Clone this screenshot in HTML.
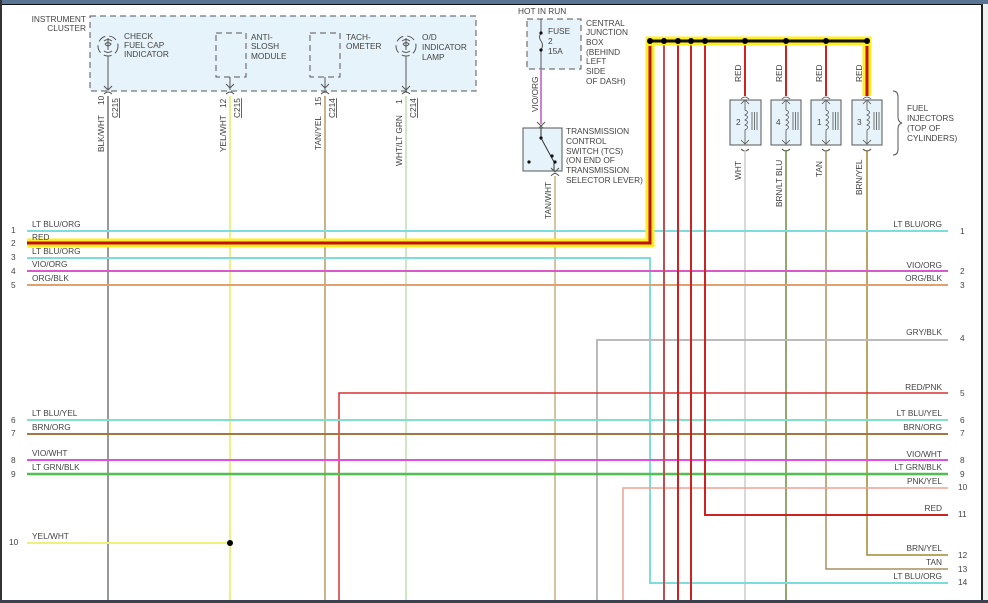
<!DOCTYPE html>
<html><head><meta charset="utf-8"><style>
html,body{margin:0;padding:0;background:#fff;width:988px;height:603px;overflow:hidden}
svg{display:block}
text{font-family:"Liberation Sans",sans-serif;font-size:8.3px;fill:#444}
</style></head><body>
<svg width="988" height="603" viewBox="0 0 988 603" xmlns="http://www.w3.org/2000/svg">
<rect x="0" y="0" width="988" height="603" fill="#fff"/>
<rect x="0" y="0" width="988" height="4" fill="#5a7493"/>
<rect x="0" y="4" width="982" height="1" fill="#111"/>
<rect x="0" y="0" width="2" height="603" fill="#333"/>
<rect x="981" y="4" width="2" height="596" fill="#222"/>
<rect x="983" y="4" width="5" height="596" fill="#f0f0f0"/>
<rect x="0" y="600" width="988" height="3" fill="#3a4250"/>

<rect x="90" y="16" width="386" height="75" fill="#e6f3fa" stroke="#555" stroke-dasharray="6,4"/>
<text x="86" y="22" text-anchor="end">INSTRUMENT</text>
<text x="86" y="31" text-anchor="end">CLUSTER</text>
<g fill="none" stroke="#555">
<circle cx="108" cy="46" r="10" stroke-dasharray="8,4"/>
<path d="M104 41 q4-3 8 0 M104 51 q4 3 8 0 M108 38 v12 M105 44 q3-3 6 0 q-3 4-6 0"/>
<circle cx="406" cy="46" r="10" stroke-dasharray="8,4"/>
<path d="M402 41 q4-3 8 0 M402 51 q4 3 8 0 M406 38 v12 M403 44 q3-3 6 0 q-3 4-6 0"/>
<rect x="216" y="33" width="30" height="44" stroke-dasharray="6,4"/>
<rect x="310" y="33" width="30" height="44" stroke-dasharray="6,4"/>
<path d="M108 56 V90 M104 86 l4 4 l4-4 M104 94 q4-4 8 0"/>
<path d="M406 56 V90 M402 86 l4 4 l4-4 M402 94 q4-4 8 0"/>
<path d="M230 77 V90 M226 84 l4 4 l4-4 M226 94 q4-4 8 0"/>
<path d="M325 77 V90 M321 84 l4 4 l4-4 M321 94 q4-4 8 0"/>
</g>
<text x="124" y="39">CHECK</text><text x="124" y="48">FUEL CAP</text><text x="124" y="57">INDICATOR</text>
<text x="251" y="40">ANTI-</text><text x="251" y="49">SLOSH</text><text x="251" y="59">MODULE</text>
<text x="346" y="40">TACH-</text><text x="346" y="49">OMETER</text>
<text x="422" y="40">O/D</text><text x="422" y="50">INDICATOR</text><text x="422" y="60">LAMP</text>
<g>
<text transform="translate(104,152) rotate(-90)">BLK/WHT</text>
<text transform="translate(104,105) rotate(-90)">10</text>
<text transform="translate(118,118) rotate(-90)" text-decoration="underline">C215</text>
<text transform="translate(226,152) rotate(-90)">YEL/WHT</text>
<text transform="translate(226,108) rotate(-90)">12</text>
<text transform="translate(240,118) rotate(-90)" text-decoration="underline">C215</text>
<text transform="translate(321,150) rotate(-90)">TAN/YEL</text>
<text transform="translate(321,106) rotate(-90)">15</text>
<text transform="translate(335,118) rotate(-90)" text-decoration="underline">C214</text>
<text transform="translate(402,166) rotate(-90)">WHT/LT GRN</text>
<text transform="translate(402,104) rotate(-90)">1</text>
<text transform="translate(416,118) rotate(-90)" text-decoration="underline">C214</text>
<text transform="translate(538,112) rotate(-90)">VIO/ORG</text>
<text transform="translate(551,219) rotate(-90)">TAN/WHT</text>
<text transform="translate(741,82) rotate(-90)">RED</text>
<text transform="translate(782,82) rotate(-90)">RED</text>
<text transform="translate(822,82) rotate(-90)">RED</text>
<text transform="translate(862,82) rotate(-90)">RED</text>
<text transform="translate(741,180) rotate(-90)">WHT</text>
<text transform="translate(782,207) rotate(-90)">BRN/LT BLU</text>
<text transform="translate(822,177) rotate(-90)">TAN</text>
<text transform="translate(862,195) rotate(-90)">BRN/YEL</text>
</g>

<line x1="108" y1="96" x2="108" y2="600" stroke="#777" stroke-width="1.5"/>
<line x1="230" y1="96" x2="230" y2="600" stroke="#eaea60" stroke-width="1.5"/>
<line x1="325" y1="96" x2="325" y2="600" stroke="#b89a60" stroke-width="1.5"/>
<line x1="406" y1="96" x2="406" y2="600" stroke="#bde0b0" stroke-width="1.5"/>

<text x="518" y="14">HOT IN RUN</text>
<rect x="527" y="19" width="54" height="50" fill="#e6f3fa" stroke="#555" stroke-dasharray="6,4"/>
<path d="M541 19 V33 M541 50 V69" stroke="#555"/>
<path d="M541 33 q-3 4 0 8 q3 4 0 9" stroke="#555" fill="none"/>
<circle cx="541" cy="33" r="1.6" fill="#111"/><circle cx="541" cy="50" r="1.6" fill="#111"/>
<text x="548" y="34">FUSE</text><text x="548" y="44">2</text><text x="548" y="54">15A</text>
<text x="586" y="26">CENTRAL</text><text x="586" y="35">JUNCTION</text><text x="586" y="45">BOX</text><text x="586" y="55">(BEHIND</text><text x="586" y="64">LEFT</text><text x="586" y="74">SIDE</text><text x="586" y="84">OF DASH)</text>
<line x1="541" y1="69" x2="541" y2="124" stroke="#d080d0" stroke-width="2"/>
<path d="M537 122 l4 4 l4-4 M537 130 l4-4 l4 4" stroke="#555" fill="none"/>
<rect x="523" y="128" width="39" height="43" fill="#e6f3fa" stroke="#555"/>
<path d="M541 128 V138 L554 162 V171" stroke="#333" fill="none"/>
<circle cx="541" cy="138" r="1.6" fill="#111"/><circle cx="552" cy="156" r="1.6" fill="#111"/><circle cx="555" cy="162" r="1.6" fill="#111"/><circle cx="529" cy="162" r="1.6" fill="#111"/>
<path d="M551 176 q4-5 8 0 M551 168 l4 4 l4-4" stroke="#555" fill="none"/>
<line x1="555" y1="176" x2="555" y2="600" stroke="#c8b080" stroke-width="1.5"/>
<text x="566" y="134">TRANSMISSION</text><text x="566" y="144">CONTROL</text><text x="566" y="154">SWITCH (TCS)</text><text x="566" y="163">(ON END OF</text><text x="566" y="173">TRANSMISSION</text><text x="566" y="183">SELECTOR LEVER)</text>

<g stroke="#555" fill="none">
<rect x="730" y="100" width="31" height="45" fill="#e6f3fa"/>
<rect x="771" y="100" width="30" height="45" fill="#e6f3fa"/>
<rect x="811" y="100" width="30" height="45" fill="#e6f3fa"/>
<rect x="852" y="100" width="30" height="45" fill="#e6f3fa"/>
<g stroke-width="0.8">
<path d="M741 99 q4-4 8 0 M745 101 V110 q5 2 0 5 q5 2 0 5 q5 2 0 5 q5 2 0 5 V144 M741 140 l4 4 l4-4 M741 104 l4-4 l4 4 M752 112 v18 M754.5 112 v18 M757 112 v18"/>
<path d="M782 99 q4-4 8 0 M786 101 V110 q5 2 0 5 q5 2 0 5 q5 2 0 5 q5 2 0 5 V144 M782 140 l4 4 l4-4 M782 104 l4-4 l4 4 M793 112 v18 M795.5 112 v18 M798 112 v18"/>
<path d="M822 99 q4-4 8 0 M826 101 V110 q5 2 0 5 q5 2 0 5 q5 2 0 5 q5 2 0 5 V144 M822 140 l4 4 l4-4 M822 104 l4-4 l4 4 M833 112 v18 M835.5 112 v18 M838 112 v18"/>
<path d="M863 99 q4-4 8 0 M867 101 V110 q5 2 0 5 q5 2 0 5 q5 2 0 5 q5 2 0 5 V144 M863 140 l4 4 l4-4 M863 104 l4-4 l4 4 M874 112 v18 M876.5 112 v18 M879 112 v18"/>
</g>
<path d="M741 149 q4 4 8 0 M782 149 q4 4 8 0 M822 149 q4 4 8 0 M863 149 q4 4 8 0"/>
<path d="M893 91 q5 0 5 6 v20 q0 5 4 6 q-4 1-4 6 v20 q0 6-5 6"/>
</g>
<text x="736" y="125">2</text><text x="776" y="125">4</text><text x="817" y="125">1</text><text x="857" y="125">3</text>
<text x="907" y="111">FUEL</text><text x="907" y="121">INJECTORS</text><text x="907" y="131">(TOP OF</text><text x="907" y="141">CYLINDERS)</text>
<line x1="745" y1="150" x2="745" y2="600" stroke="#cccccc" stroke-width="1.5"/>
<line x1="786" y1="150" x2="786" y2="600" stroke="#6a8c3a" stroke-width="1.5"/>
<path d="M826 150 V569 H948" stroke="#a89060" stroke-width="1.5" fill="none"/>
<path d="M867 150 V555 H948" stroke="#a08a30" stroke-width="1.5" fill="none"/>

<g stroke-width="2" fill="none">
<line x1="27" y1="231" x2="948" y2="231" stroke="#7ddcdc"/>
<path d="M27 258 H650 V583 H948" stroke="#7ddcdc"/>
<line x1="27" y1="271" x2="948" y2="271" stroke="#d85ac8"/>
<line x1="27" y1="285" x2="948" y2="285" stroke="#e0a070"/>
<path d="M597 600 V340 H948" stroke="#bbbbbb"/>
<path d="M339 600 V393 H948" stroke="#d83030" stroke-width="1.5"/>
<line x1="27" y1="420" x2="948" y2="420" stroke="#80e0c8"/>
<line x1="27" y1="434" x2="948" y2="434" stroke="#a07840"/>
<line x1="27" y1="460" x2="948" y2="460" stroke="#e050e0"/>
<line x1="27" y1="474" x2="948" y2="474" stroke="#50c050" stroke-width="2.5"/>
<path d="M623 600 V488 H948" stroke="#f0a090" stroke-width="1.5"/>
<line x1="27" y1="543" x2="230" y2="543" stroke="#f0f080"/>
</g>
<circle cx="230" cy="543" r="3" fill="#000"/>
<g stroke="#cc2222" stroke-width="2">
<line x1="664" y1="41" x2="664" y2="600" stroke="#c05050"/>
<line x1="678" y1="41" x2="678" y2="600"/>
<line x1="691" y1="41" x2="691" y2="600"/>
<path d="M705 41 V515 H948" fill="none"/>
<line x1="745" y1="41" x2="745" y2="96"/>
<line x1="786" y1="41" x2="786" y2="96"/>
<line x1="826" y1="41" x2="826" y2="96"/>
</g>
<path d="M27 243 H650 V41 H867 V96" stroke="#ffee22" stroke-width="9" fill="none" stroke-linejoin="miter"/>
<path d="M27 243 H650 V46" stroke="#c01010" stroke-width="3" fill="none"/>
<line x1="867" y1="46" x2="867" y2="96" stroke="#c01010" stroke-width="3"/>
<line x1="650" y1="41" x2="867" y2="41" stroke="#111" stroke-width="3"/>
<g fill="#000">
<circle cx="650" cy="41" r="3"/><circle cx="664" cy="41" r="3"/><circle cx="678" cy="41" r="3"/><circle cx="691" cy="41" r="3"/><circle cx="705" cy="41" r="3"/><circle cx="745" cy="41" r="3"/><circle cx="786" cy="41" r="3"/><circle cx="826" cy="41" r="3"/><circle cx="867" cy="41" r="3"/>
</g>

<text x="11" y="233">1</text><text x="32" y="227">LT BLU/ORG</text>
<text x="11" y="246">2</text><text x="32" y="240">RED</text>
<text x="11" y="260">3</text><text x="32" y="254">LT BLU/ORG</text>
<text x="11" y="274">4</text><text x="32" y="267">VIO/ORG</text>
<text x="11" y="288">5</text><text x="32" y="281">ORG/BLK</text>
<text x="11" y="423">6</text><text x="32" y="416">LT BLU/YEL</text>
<text x="11" y="436">7</text><text x="32" y="430">BRN/ORG</text>
<text x="11" y="463">8</text><text x="32" y="456">VIO/WHT</text>
<text x="11" y="477">9</text><text x="32" y="470">LT GRN/BLK</text>
<text x="9" y="545">10</text><text x="32" y="539">YEL/WHT</text>
<g text-anchor="end">
<text x="942" y="227">LT BLU/ORG</text>
<text x="942" y="268">VIO/ORG</text>
<text x="942" y="281">ORG/BLK</text>
<text x="942" y="335">GRY/BLK</text>
<text x="942" y="390">RED/PNK</text>
<text x="942" y="416">LT BLU/YEL</text>
<text x="942" y="430">BRN/ORG</text>
<text x="942" y="457">VIO/WHT</text>
<text x="942" y="470">LT GRN/BLK</text>
<text x="942" y="484">PNK/YEL</text>
<text x="942" y="511">RED</text>
<text x="942" y="551">BRN/YEL</text>
<text x="942" y="565">TAN</text>
<text x="942" y="579">LT BLU/ORG</text>
</g>
<text x="960" y="234">1</text><text x="960" y="274">2</text><text x="960" y="288">3</text><text x="960" y="341">4</text><text x="960" y="396">5</text><text x="960" y="423">6</text><text x="960" y="436">7</text><text x="960" y="463">8</text><text x="960" y="477">9</text><text x="958" y="490">10</text><text x="958" y="517">11</text><text x="958" y="558">12</text><text x="958" y="572">13</text><text x="958" y="585">14</text>
</svg>
</body></html>
